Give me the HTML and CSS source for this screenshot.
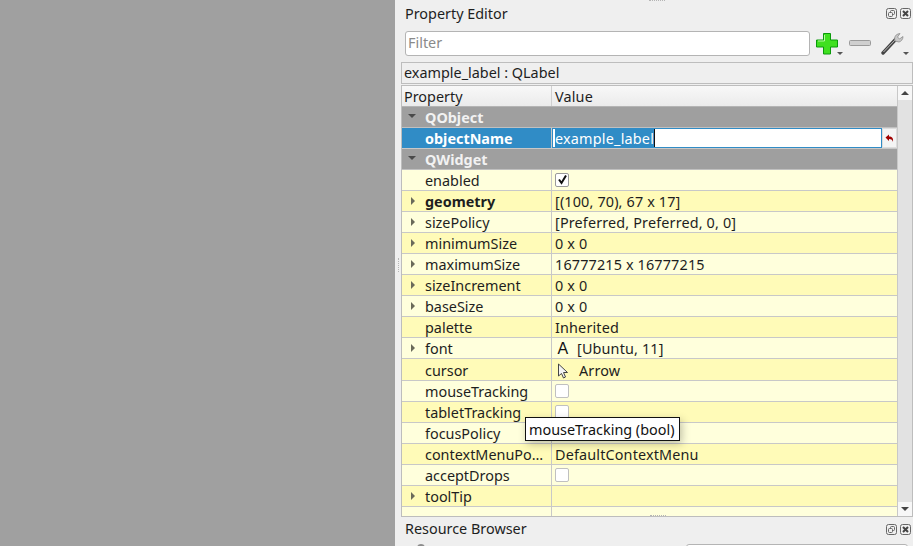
FILE: index.html
```html
<!DOCTYPE html>
<html>
<head>
  <title>Property Editor</title>
  <link rel="stylesheet" href="styles.css">
</head>
<body>
  <div class="canvas"></div>
  <div class="dock">
    <div class="grip grip-top"></div>
    <div class="grip grip-left"></div>
    <div class="grip grip-bottom"></div>

    <div class="dock-title">
      <span>Property Editor</span>
      <div class="dock-buttons">
        <svg class="dock-btn" viewBox="0 0 11 11"><rect x="0.5" y="0.5" width="10" height="10" rx="2" fill="none" stroke="#666"/><rect x="4.5" y="2.5" width="4" height="4" rx="1" fill="none" stroke="#666"/><rect x="2.5" y="4.5" width="4" height="4" rx="1" fill="#efefef" stroke="#666"/></svg>
        <svg class="dock-btn" viewBox="0 0 11 11"><rect x="0.5" y="0.5" width="10" height="10" rx="2" fill="none" stroke="#666"/><path d="M3 3l5 5M8 3l-5 5" stroke="#444" stroke-width="2"/></svg>
      </div>
    </div>

    <div class="filter-row">
      <div class="filter">Filter</div>
      <div class="tool">
        <svg width="24" height="24" viewBox="0 0 24 24"><path d="M8.500 2.500h7v6.500h7v7h-7v7h-7v-7h-7v-7h7z" fill="#3fe01f" stroke="#0a9a0a"/><path d="M9.500 4v6H3" fill="none" stroke="#b4f7a0"/></svg>
        <i class="tool-arrow"></i>
      </div>
      <div class="tool">
        <svg width="24" height="24" viewBox="0 0 24 24"><rect x="1.500" y="9.500" width="21" height="5" rx="1" fill="#cfcfcf" stroke="#9a9a9a"/></svg>
      </div>
      <div class="tool">
        <svg width="24" height="24" viewBox="0 0 24 24"><path d="M2 22L15 8" stroke="#444" stroke-width="3.400" stroke-linecap="round"/><path d="M2.500 21L15 8" stroke="#bbb" stroke-width="1"/><path d="M14 10c-1-3 0-6 3-7l2-.5-2.500 3.500 2 2 3.500-2.500c0 3-2 5-4 5.500z" fill="#c8c8c8" stroke="#8c8c8c" stroke-width="0.800"/></svg>
        <i class="tool-arrow"></i>
      </div>
    </div>

    <div class="class-label">example_label : QLabel</div>

    <div class="tree">
      <div class="tree-main">
        <div class="row head"><div class="name">Property</div><div class="value">Value</div></div>

        <div class="row group"><i class="arrow-down"></i>QObject</div>
        <div class="row selected">
          <div class="name"><b>objectName</b></div>
          <div class="value">
            <div class="editor"><span class="sel">example_label</span></div>
            <div class="reset"><svg width="9" height="9" viewBox="0 0 9 9"><path d="M0.500 3.500L4 0.500v2c3 0 4.500 1.500 4 5.500-.5-2-1.500-3-4-3v2z" fill="#a00000"/></svg></div>
          </div>
        </div>
        <div class="row group"><i class="arrow-down"></i>QWidget</div>

        <div class="row"><div class="name">enabled</div><div class="value"><span class="check on"><svg width="11" height="11" viewBox="0 0 11 11"><path d="M2 5.500l2.500 3.500L9 1.500" fill="none" stroke="#111" stroke-width="2"/></svg></span></div></div>
        <div class="row alt"><div class="name"><i class="arrow-right"></i><b>geometry</b></div><div class="value">[(100, 70), 67 x 17]</div></div>
        <div class="row"><div class="name"><i class="arrow-right"></i>sizePolicy</div><div class="value">[Preferred, Preferred, 0, 0]</div></div>
        <div class="row alt"><div class="name"><i class="arrow-right"></i>minimumSize</div><div class="value">0 x 0</div></div>
        <div class="row"><div class="name"><i class="arrow-right"></i>maximumSize</div><div class="value">16777215 x 16777215</div></div>
        <div class="row alt"><div class="name"><i class="arrow-right"></i>sizeIncrement</div><div class="value">0 x 0</div></div>
        <div class="row"><div class="name"><i class="arrow-right"></i>baseSize</div><div class="value">0 x 0</div></div>
        <div class="row alt"><div class="name">palette</div><div class="value">Inherited</div></div>
        <div class="row"><div class="name"><i class="arrow-right"></i>font</div><div class="value"><span class="val-icon font-a">A</span>[Ubuntu, 11]</div></div>
        <div class="row alt tall"><div class="name">cursor</div><div class="value"><span class="val-icon cursor-icon"><svg width="12" height="16" viewBox="0 0 12 16"><path d="M1.500 1v12l3-2.500 2 4.500 2-1-2-4.500h4z" fill="#f4f4f4" stroke="#444"/></svg></span>Arrow</div></div>
        <div class="row"><div class="name">mouseTracking</div><div class="value"><span class="check"></span></div></div>
        <div class="row alt"><div class="name">tabletTracking</div><div class="value"><span class="check"></span></div></div>
        <div class="row"><div class="name">focusPolicy</div><div class="value"></div></div>
        <div class="row alt"><div class="name">contextMenuPo…</div><div class="value">DefaultContextMenu</div></div>
        <div class="row"><div class="name">acceptDrops</div><div class="value"><span class="check"></span></div></div>
        <div class="row alt"><div class="name"><i class="arrow-right"></i>toolTip</div><div class="value"></div></div>
        <div class="row"><div class="name"></div><div class="value"></div></div>
      </div>
      <div class="scrollbar">
        <div class="scroll-btn"><i class="scroll-up"></i></div>
        <div class="scroll-track"></div>
        <div class="scroll-btn"><i class="scroll-down"></i></div>
      </div>
    </div>

    <div class="dock-title second">
      <span>Resource Browser</span>
      <div class="dock-buttons">
        <svg class="dock-btn" viewBox="0 0 11 11"><rect x="0.5" y="0.5" width="10" height="10" rx="2" fill="none" stroke="#666"/><rect x="4.5" y="2.5" width="4" height="4" rx="1" fill="none" stroke="#666"/><rect x="2.5" y="4.5" width="4" height="4" rx="1" fill="#efefef" stroke="#666"/></svg>
        <svg class="dock-btn" viewBox="0 0 11 11"><rect x="0.5" y="0.5" width="10" height="10" rx="2" fill="none" stroke="#666"/><path d="M3 3l5 5M8 3l-5 5" stroke="#444" stroke-width="2"/></svg>
      </div>
    </div>

    <div class="browser-row">
      <div class="browser-dot"></div>
      <div class="browser-input"></div>
    </div>

    <div class="tooltip">mouseTracking (bool)</div>
  </div>
</body>
</html>
```

FILE: styles.css
```css
html, body {
  margin: 0;
  height: 100%;
}

body {
  display: flex;
  width: 913px;
  height: 546px;
  overflow: hidden;
  font-family: "Noto Sans", sans-serif;
  font-size: 14.4px;
  color: #1e1e1e;
  background-color: #efefef;
}

.canvas {
  width: 395px;
  background-color: #a0a0a0;
}

.dock {
  position: relative;
  width: 518px;
  padding-left: 6px;
  box-sizing: border-box;
  display: flex;
  flex-direction: column;
}

.dock > * {
  flex-shrink: 0;
}

.grip {
  position: absolute;
  border: 0 dotted #b5b5b5;
}

.grip-top {
  left: 254px;
  top: 0;
  width: 16px;
  border-top-width: 1px;
}

.grip-left {
  left: 3px;
  top: 258px;
  height: 14px;
  border-left-width: 1px;
}

.grip-bottom {
  left: 255px;
  top: 515px;
  width: 16px;
  border-top-width: 1px;
}

.dock-title {
  display: flex;
  justify-content: space-between;
  align-items: center;
  height: 26px;
  padding: 0 2px 2px 4px;
}

.dock-buttons {
  display: flex;
  gap: 3px;
}

.dock-btn {
  width: 11px;
  height: 11px;
}

.filter-row {
  display: flex;
  align-items: center;
  height: 26px;
  margin-top: 2px;
  padding-left: 4px;
}

.filter {
  width: 401px;
  height: 23px;
  padding-left: 2px;
  line-height: 21px;
  color: #8a8a8a;
  background-color: #fff;
  border: 1px solid #b4b4b4;
  border-radius: 3px;
  margin-right: 5px;
}

.tool {
  position: relative;
  width: 24px;
  height: 24px;
  margin-right: 9px;
}

.tool:last-child {
  margin-right: 0;
}

.tool-arrow {
  position: absolute;
  right: -4px;
  bottom: 0;
  border: 3px solid transparent;
  border-top: 3px solid #555;
  border-bottom: 0;
}

.class-label {
  height: 20px;
  margin-top: 6px;
  padding-left: 2px;
  line-height: 20px;
  border: 1px solid #bdbdbd;
}

.tree {
  display: flex;
  height: 432px;
  margin-top: 1px;
  box-sizing: border-box;
  border: 1px solid #bdbdbd;
  overflow: hidden;
}

.tree-main {
  flex: 1;
  overflow: hidden;
  background-color: #ffffdc;
}

.row {
  display: flex;
  box-sizing: border-box;
  height: 21px;
  line-height: 22px;
  border-bottom: 1px solid #c8c8c8;
  background-color: #ffffdc;
}

.row.tall {
  height: 22px;
}

.row.tall .name {
  line-height: 24px;
}

.row.alt {
  background-color: #fffbb8;
}

.name {
  position: relative;
  box-sizing: border-box;
  width: 150px;
  flex-shrink: 0;
  padding-left: 23px;
  border-right: 1px solid #c8c8c8;
}

.value {
  flex: 1;
  display: flex;
  align-items: center;
  padding: 2px 0 0 3px;
  letter-spacing: 0.15px;
}

.row.head {
  background: linear-gradient(#f8f8f8, #ebebeb);
  border-bottom-color: #b4b4b4;
}

.row.head .name {
  padding-left: 2px;
  border-right-color: #d0d0d0;
}

.row.group {
  position: relative;
  padding-left: 23px;
  font-weight: bold;
  color: #f2f2f2;
  background-color: #9f9f9f;
  border-bottom-color: #c0c0c0;
}

.row.selected {
  color: #fff;
  background-color: #308cc6;
}

.row.selected .value {
  padding: 0;
  align-items: stretch;
  background-color: #fff;
}

.editor {
  flex: 1;
  box-sizing: border-box;
  padding-left: 2px;
  line-height: 20px;
  background-color: #fff;
  border: 1px solid #308cc6;
  overflow: hidden;
}

.sel {
  display: inline-block;
  height: 18px;
  letter-spacing: 0.2px;
  background-color: #308cc6;
  border-right: 1px solid #111;
}

.reset {
  width: 15px;
  display: flex;
  align-items: center;
  justify-content: center;
  background-color: #f4f4f4;
  border: 1px solid #dcdcdc;
  box-sizing: border-box;
}

.arrow-down {
  position: absolute;
  left: 6px;
  top: 7px;
  border: 4px solid transparent;
  border-top: 4px solid #4a4a4a;
  border-bottom: 0;
}

.arrow-right {
  position: absolute;
  left: 9px;
  top: 6px;
  border: 4px solid transparent;
  border-left: 4px solid #6a6a5a;
  border-right: 0;
}

.check {
  display: flex;
  align-items: center;
  justify-content: center;
  box-sizing: border-box;
  width: 14px;
  height: 14px;
  margin-top: -3px;
  background-color: #fff;
  border: 1px solid #c0c0c0;
  border-radius: 2px;
}

.check.on {
  border-color: #9a9a9a;
}

.val-icon {
  display: inline-flex;
  justify-content: center;
  width: 16px;
  margin-right: 6px;
}

.cursor-icon {
  margin-right: 8px;
}

.font-a {
  font-family: "Liberation Sans", sans-serif;
  font-size: 16px;
  line-height: 18px;
  margin-top: 0;
  color: #111;
}

.scrollbar {
  width: 14px;
  display: flex;
  flex-direction: column;
  border-left: 1px solid #c8c8c8;
}

.scroll-btn {
  height: 14px;
  display: flex;
  align-items: center;
  justify-content: center;
  background-color: #f7f7f7;
}

.scroll-track {
  flex: 1;
  background-color: #e2e2e2;
}

.scroll-up {
  border: 4px solid transparent;
  border-bottom: 4px solid #444;
  border-top: 0;
}

.scroll-down {
  border: 4px solid transparent;
  border-top: 4px solid #444;
  border-bottom: 0;
}

.second {
  height: 22px;
}

.second .dock-buttons {
  margin-top: 2px;
}

.browser-row {
  display: flex;
  justify-content: space-between;
  margin-top: 3px;
  padding: 0 5px 0 16px;
}

.browser-dot {
  width: 8px;
  height: 8px;
  border-radius: 50%;
  background-color: #8c8c8c;
}

.browser-input {
  width: 220px;
  height: 10px;
  background-color: #fff;
  border: 1px solid #b4b4b4;
  border-radius: 3px;
}

.tooltip {
  position: absolute;
  left: 130px;
  top: 417px;
  box-sizing: border-box;
  height: 24px;
  padding: 0 5px 0 3px;
  line-height: 23px;
  white-space: nowrap;
  color: #111;
  background-color: #fff;
  border: 1px solid #111;
  box-shadow: 2px 3px 8px rgba(0, 0, 0, 0.25);
}
```
